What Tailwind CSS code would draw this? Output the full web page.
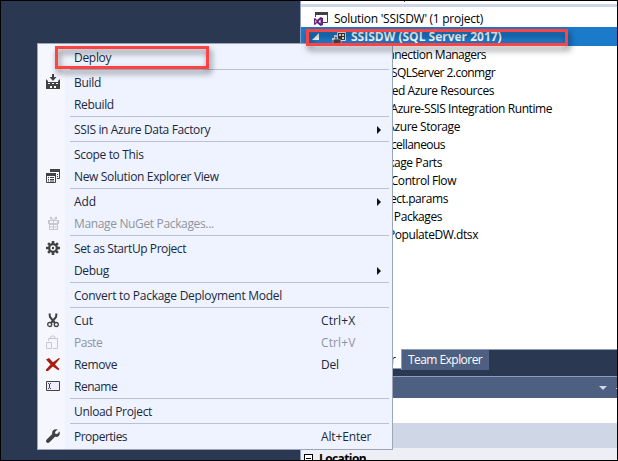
<!DOCTYPE html>
<html lang="en">
<head>
<meta charset="utf-8">
<title>Solution Explorer</title>
<script src="https://cdn.jsdelivr.net/npm/@tailwindcss/browser@4"></script>
</head>
<body class="relative w-[618px] h-[461px] overflow-hidden bg-[#2b3851] font-['Open_Sans','Noto_Sans',sans-serif] text-[12px] leading-[18px] whitespace-nowrap">
<div class="flex w-full h-full border border-black">
  <div class="w-[299px] shrink-0"></div>
  <!-- Solution explorer column -->
  <div class="flex-1 min-w-0 flex flex-col border-l border-[#8e9bbc] text-black">
    <div class="h-[3px] bg-white shrink-0 relative"><div class="absolute left-[103px] top-0 w-px h-px bg-gray-600"></div></div>
    <div class="h-[3px] bg-[#cfd6e5] shrink-0"></div>
    <div class="h-[342px] bg-white shrink-0 pt-[3px] tracking-[-0.43px]">
      <div class="h-[18px] flex items-center pl-[13px]">
        <svg class="w-[15px] h-[14px] shrink-0" viewBox="0 0 15 14"><path d="M1.500 5V.5h12v10H9" fill="#fff" stroke="#424242"/><path d="M1 0h13v3H1z" fill="#424242"/><path d="M0 6.500l1-.5 2 2L6.500 5 9 6v7l-2.500 1L3 11l-2 2-1-.5zM1.300 8v3l1.300-1.500zM6.500 7.600L4.500 9.500l2 1.900z" fill="#68217a" fill-rule="evenodd"/></svg>
        <span class="ml-[5px] tracking-[-0.27px]">Solution 'SSISDW' (1 project)</span>
      </div>
      <div class="h-[19px] -mt-px bg-[#1c7acb] flex items-center pl-[11px] text-white">
        <svg class="w-[7px] h-[7px] shrink-0" viewBox="0 0 7 7"><path d="M7 0v7H0z" fill="#fff"/></svg>
        <svg class="w-[16px] h-[14px] ml-[12px] mt-[2px] shrink-0" viewBox="0 0 16 14"><path d="M6.500 1.500h8v8h-8z" fill="#3b3b40" stroke="#e6e6e6"/><path d="M8 3h2v2H8zM11 3h2v2h-2zM11 6h2v2h-2z" fill="#eee"/><path d="M3 4h3v2H4v3H1V7h2z" fill="#ddd"/><path d="M2 9.500C2 7.500 10 7.500 10 9.500V13H2z" fill="#424242" stroke="#ccc" stroke-width=".7"/></svg>
        <span class="ml-[4px] font-bold tracking-[0px]">SSISDW (SQL Server 2017)</span>
      </div>
      <div class="w-[185px] text-right tracking-[-0.53px]">Connection Managers</div>
      <div class="w-[194px] text-right tracking-[-0.55px]">SQLServer 2.conmgr</div>
      <div class="w-[193px] text-right">Linked Azure Resources</div>
      <div class="w-[251px] text-right">Azure-SSIS Integration Runtime</div>
      <div class="w-[159px] text-right">Azure Storage</div>
      <div class="w-[144px] text-right tracking-[-0.55px]">Miscellaneous</div>
      <div class="w-[141px] text-right">Package Parts</div>
      <div class="w-[155px] text-right">Control Flow</div>
      <div class="w-[147px] text-right">Project.params</div>
      <div class="w-[141px] text-right">SSIS Packages</div>
      <div class="w-[177px] text-right">PopulateDW.dtsx</div>
    </div>
    <!-- Tool window tabs -->
    <div class="h-[27px] shrink-0 bg-[#2b3851] border-t border-[#8e9bbc] flex">
      <div class="w-[100px] h-[20px] -mt-px bg-white border-b border-[#8e9bbc] text-right pr-[5px] leading-[21px]">r</div>
      <div class="w-[88px] h-[20px] bg-[#4d6082] border-l border-[#8e9bbc] text-white pl-[6px] leading-[20px] tracking-[-0.55px]">Team Explorer</div>
    </div>
    <div class="h-[22px] shrink-0 bg-[#4d6082] border-t border-[#8e9bbc] flex items-center justify-end">
      <svg class="w-[8px] h-[4px]" viewBox="0 0 8 4"><path d="M0 0h8L4 4z" fill="#cfd6e5"/></svg>
      <div class="w-px h-px ml-[9px] mt-[2px] bg-[#cfd6e5]"></div>
    </div>
    <div class="h-[25px] shrink-0 bg-white"></div>
    <div class="h-[25px] shrink-0 bg-[#cfd6e5]"></div>
    <div class="h-[12px] shrink-0 bg-[#eeeef7] overflow-hidden flex items-start pl-[3px]">
      <div class="w-[9px] h-[9px] mt-[6px] border border-black shrink-0 bg-white flex items-center justify-center"><div class="w-[5px] h-px bg-black"></div></div>
      <span class="ml-[6px] mt-[2px] font-bold tracking-[-0.6px]">Location</span>
    </div>
  </div>
</div>

<!-- Context menu -->
<div class="absolute left-[37px] top-[43px] w-[356px] h-[407px] border border-[#9ba7b7] bg-[linear-gradient(to_right,#f6f6ff_27px,#eef3ff_27px)] pt-[3px] text-[#1b293e] leading-[22px] tracking-[-0.35px]">
  <div class="h-[22px] flex"><div class="w-[36px]"></div><span class="tracking-[-0.3px]">Deploy</span></div>
  <div class="h-[3px] ml-[32px] mr-[3px] border-t border-[#bcc1cf]"></div>
  <div class="h-[22px] flex"><div class="w-[36px] pl-[8px] pt-[2px]"><svg class="w-[14px] h-[15px]" viewBox="0 0 14 15" fill="#424242"><path d="M6 0h2v3h2.500L7 7 3.500 3H6zM0 5l2 2v1h10V7l2-2v10H0z"/><path d="M2 9h2v1H2zM6 9h2v1H6zM10 9h2v1h-2zM4 12h2v2H4zM8 12h2v2H8z" fill="#f6f6ff"/></svg></div><span class="tracking-[-0.3px]">Build</span></div>
  <div class="h-[22px] flex"><div class="w-[36px]"></div><span>Rebuild</span></div>
  <div class="h-[3px] ml-[32px] mr-[3px] border-t border-[#bcc1cf]"></div>
  <div class="h-[22px] flex items-center"><div class="w-[36px]"></div><span class="flex-1 tracking-[-0.36px]">SSIS in Azure Data Factory</span><svg class="w-[4px] h-[8px] mr-[11px]" viewBox="0 0 4 8"><path d="M0 0l4 4-4 4z" fill="#111"/></svg></div>
  <div class="h-[3px] ml-[32px] mr-[3px] border-t border-[#bcc1cf]"></div>
  <div class="h-[22px] flex"><div class="w-[36px]"></div><span>Scope to This</span></div>
  <div class="h-[22px] flex"><div class="w-[36px] pl-[8px] pt-[3px]"><svg class="w-[14px] h-[14px]" viewBox="0 0 14 14"><path d="M4.500 3V.5h9v9H11" fill="none" stroke="#424242"/><path d="M4 0h10v3H4zM0 4h10v3H0z" fill="#424242"/><path d="M.5 4.500h9v9h-9z" fill="none" stroke="#424242"/><path d="M2 8.500h1M4 8.500h4M2 10.500h1M4 10.500h4M2 12h1M4 12h4M11 5.500h1M11 7.500h1" stroke="#424242"/></svg></div><span>New Solution Explorer View</span></div>
  <div class="h-[3px] ml-[32px] mr-[3px] border-t border-[#bcc1cf]"></div>
  <div class="h-[22px] flex items-center"><div class="w-[36px]"></div><span class="flex-1 tracking-[-0.1px]">Add</span><svg class="w-[4px] h-[8px] mr-[11px]" viewBox="0 0 4 8"><path d="M0 0l4 4-4 4z" fill="#111"/></svg></div>
  <div class="h-[22px] flex text-[#8f939c]"><div class="w-[36px] pl-[10px] pt-[3px]"><svg class="w-[11px] h-[14px]" viewBox="0 0 11 14" fill="#c6c8cd"><path d="M0 4h11v4H0zM1 8h9v6H1z"/><path d="M2 5h3v2H2zM6 5h3v2H6zM2 9h3v1.500H2zM6 9h3v1.500H6zM2 11.500h3V13H2zM6 11.500h3V13H6z" fill="#f6f6ff"/><path d="M5.500 4L2 3V.8h1.500zM5.500 4L9 3V.8H7.500z"/></svg></div><span>Manage NuGet Packages...</span></div>
  <div class="h-[3px] ml-[32px] mr-[3px] border-t border-[#bcc1cf]"></div>
  <div class="h-[22px] flex"><div class="w-[36px] pl-[8px] pt-[3px]"><svg class="w-[14px] h-[14px]" viewBox="0 0 14 14"><g stroke="#424242" stroke-width="2.600"><path d="M7 0v14M0 7h14M2.100 2.100l9.800 9.800M11.900 2.100l-9.800 9.800"/></g><circle cx="7" cy="7" r="5" fill="#424242"/><circle cx="7" cy="7" r="2.700" fill="#f6f6ff"/><circle cx="7" cy="7" r="1.200" fill="#424242"/></svg></div><span class="tracking-[-0.42px]">Set as StartUp Project</span></div>
  <div class="h-[22px] flex items-center"><div class="w-[36px]"></div><span class="flex-1">Debug</span><svg class="w-[4px] h-[8px] mr-[11px]" viewBox="0 0 4 8"><path d="M0 0l4 4-4 4z" fill="#111"/></svg></div>
  <div class="h-[3px] ml-[32px] mr-[3px] border-t border-[#bcc1cf]"></div>
  <div class="h-[22px] flex"><div class="w-[36px]"></div><span class="tracking-[-0.27px]">Convert to Package Deployment Model</span></div>
  <div class="h-[3px] ml-[32px] mr-[3px] border-t border-[#bcc1cf]"></div>
  <div class="h-[22px] flex"><div class="w-[36px] pl-[9px] pt-[3px]"><svg class="w-[12px] h-[15px]" viewBox="0 0 12 15" fill="none" stroke="#424242"><path d="M2.500.5L3 4l5 6M9.500.5L9 4l-5 6" stroke-width="2"/><circle cx="2.700" cy="11.500" r="2" stroke-width="1.300"/><circle cx="9.300" cy="11.500" r="2" stroke-width="1.300"/></svg></div><span class="w-[247px] tracking-[-0.1px]">Cut</span><span class="tracking-[0.1px]">Ctrl+X</span></div>
  <div class="h-[22px] flex text-[#8f939c]"><div class="w-[36px] pl-[8px] pt-[3px]"><svg class="w-[12px] h-[15px]" viewBox="0 0 12 15" fill="none" stroke="#c6c8cd"><path d="M2.500 6V3.500h9v10H7M4.500 3.500V2l1-1h2.500l1 1v1.500M.5 7.500h5v6h-5z"/></svg></div><span class="w-[247px] tracking-[-0.5px]">Paste</span><span class="tracking-[0.1px]">Ctrl+V</span></div>
  <div class="h-[22px] flex"><div class="w-[36px] pl-[8px] pt-[4px]"><svg class="w-[14px] h-[13px]" viewBox="0 0 14 13"><path d="M0 1.500L3 0 7 4.300 13 0l1 .5L9 6.500 13.500 11l-1.300 1.300L6.800 8.500 2 13H0v-1.500L4.500 6.500z" fill="#a81e11"/></svg></div><span class="w-[247px]">Remove</span><span class="tracking-[-0.2px]">Del</span></div>
  <div class="h-[22px] flex"><div class="w-[36px] pl-[8px] pt-[5px]"><svg class="w-[14px] h-[10px]" viewBox="0 0 14 10"><path d="M.5.5h13v9H.5z" fill="#efecff" stroke="#424242"/><path d="M2 2.500h1M4 2.500h1M3.500 3v4M2 7.500h1M4 7.500h1" stroke="#424242"/></svg></div><span class="tracking-[-0.48px]">Rename</span></div>
  <div class="h-[3px] ml-[32px] mr-[3px] border-t border-[#bcc1cf]"></div>
  <div class="h-[22px] flex"><div class="w-[36px]"></div><span class="tracking-[-0.33px]">Unload Project</span></div>
  <div class="h-[3px] ml-[32px] mr-[3px] border-t border-[#bcc1cf]"></div>
  <div class="h-[22px] flex"><div class="w-[36px] pl-[8px] pt-[3px]"><svg class="w-[14px] h-[14px]" viewBox="0 0 14 14"><path d="M11.500.6L9 3l.3 1.800 1.800.3L13.500 2.600C14.600 5.500 12.500 8.500 9 7.800L3.500 13.300C2.500 14.300.8 14 .3 13S0 11.200.7 10.500L6.200 5C5.500 1.500 8.500-.6 11.500.6z" fill="#424242"/></svg></div><span class="w-[247px] tracking-[-0.5px]">Properties</span><span class="tracking-[-0.15px]">Alt+Enter</span></div>
</div>

<!-- Callout frames -->
<div class="absolute left-[55px] top-[46px] w-[154px] h-[23px] border-[3px] border-[#ff4242] drop-shadow-[2px_4px_3px_rgba(0,0,0,0.55)]"></div>
<div class="absolute left-[306px] top-[29px] w-[262px] h-[17px] border-[3px] border-[#ff4242] drop-shadow-[2px_4px_3px_rgba(0,0,0,0.55)]"></div>
</body>
</html>
